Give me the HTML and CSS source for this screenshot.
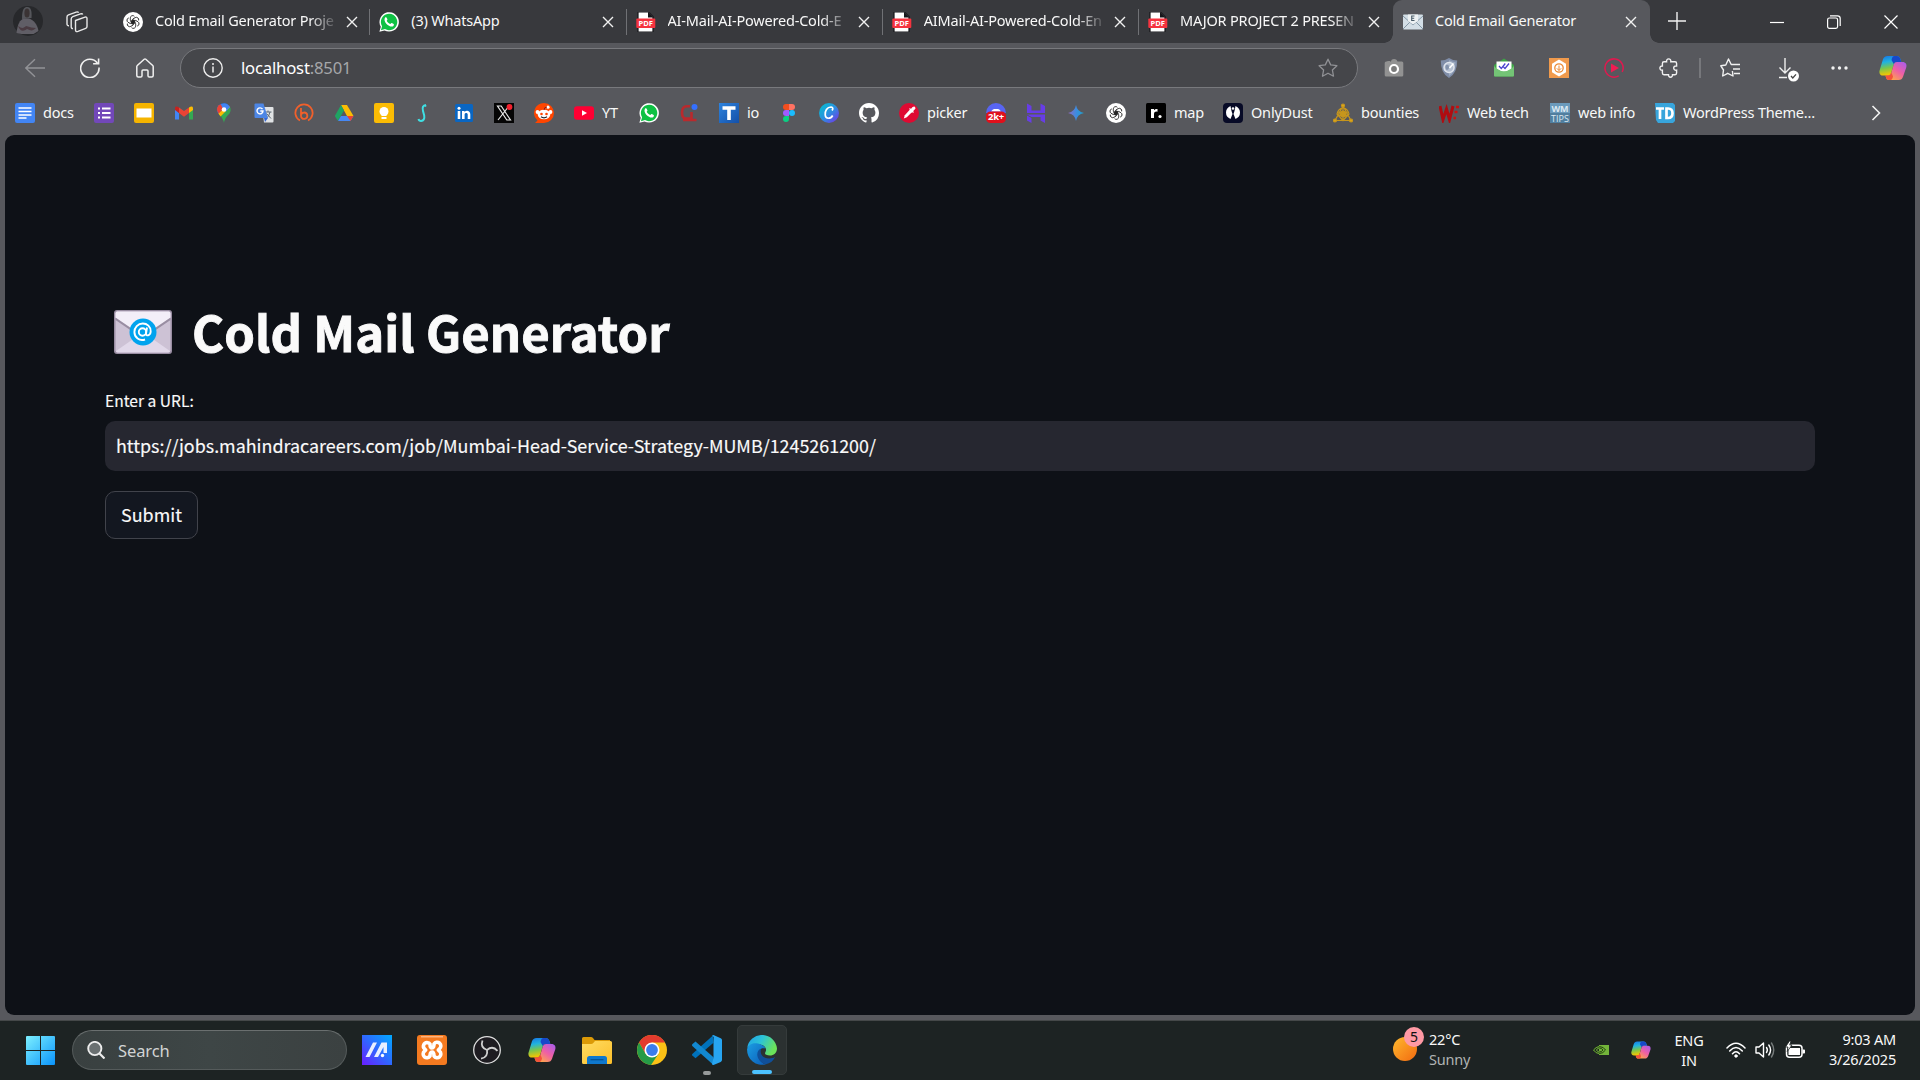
FILE: index.html
```html
<!DOCTYPE html>
<html lang="en">
<head>
<meta charset="utf-8">
<title>Cold Email Generator</title>
<link rel="stylesheet" href="styles.css">
</head>
<body>
<svg class="defs" aria-hidden="true">
  <defs>
    <linearGradient id="cpA" x1="0" y1="0" x2=".2" y2="1"><stop offset="0" stop-color="#1672e6"/><stop offset=".35" stop-color="#20b2e0"/><stop offset=".65" stop-color="#79c64d"/><stop offset="1" stop-color="#f7c600"/></linearGradient>
    <linearGradient id="cpB" x1="1" y1="0" x2=".2" y2="1"><stop offset="0" stop-color="#a35cf0"/><stop offset=".5" stop-color="#ef5fa5"/><stop offset="1" stop-color="#ffb13d"/></linearGradient>
    <linearGradient id="win" gradientUnits="userSpaceOnUse" x1="0" y1="0" x2="29" y2="29"><stop offset="0" stop-color="#7df0ff"/><stop offset="1" stop-color="#0a93fb"/></linearGradient>
    <linearGradient id="ma" x1="0" y1="1" x2="1" y2="0"><stop offset="0" stop-color="#6a1cff"/><stop offset=".5" stop-color="#2f68ff"/><stop offset="1" stop-color="#00aaff"/></linearGradient>
    <linearGradient id="sun" x1="0" y1="0" x2="1" y2="1"><stop offset="0" stop-color="#ffb92e"/><stop offset="1" stop-color="#f26a10"/></linearGradient>
    <linearGradient id="edgeTop" x1="0" y1="0" x2="1" y2=".4"><stop offset="0" stop-color="#1f9fe8"/><stop offset=".5" stop-color="#2cc3d6"/><stop offset="1" stop-color="#6be35a"/></linearGradient>
    <linearGradient id="edgeLow" x1="0" y1="0" x2="1" y2="1"><stop offset="0" stop-color="#1b9de2"/><stop offset="1" stop-color="#0b5cb8"/></linearGradient>
    <linearGradient id="canva" x1="0" y1="0" x2="1" y2="1"><stop offset="0" stop-color="#00c4cc"/><stop offset=".5" stop-color="#2a90e0"/><stop offset="1" stop-color="#7d2ae8"/></linearGradient>
    <linearGradient id="gem" x1="0" y1="0" x2="1" y2="0"><stop offset="0" stop-color="#9168c0"/><stop offset=".5" stop-color="#3f8be0"/><stop offset="1" stop-color="#1ba1c8"/></linearGradient>
    <linearGradient id="folder" x1="0" y1="0" x2="1" y2="1"><stop offset="0" stop-color="#ffdc62"/><stop offset="1" stop-color="#fcbf2b"/></linearGradient>
    <linearGradient id="tbl" x1="0" y1="0" x2="1" y2="1"><stop offset="0" stop-color="#2d83de"/><stop offset="1" stop-color="#1450a8"/></linearGradient>
    <symbol id="close" viewBox="0 0 12 12"><path d="M1 1l10 10M11 1L1 11" fill="none" stroke="#f1f1f1" stroke-width="1.4"/></symbol>
    <symbol id="gpt" viewBox="0 0 20 20"><circle cx="10" cy="10" r="10" fill="#fff"/><g fill="none" stroke="#222" stroke-width=".85"><path id="petal" d="M7.300 8.400V5.900a2.400 2.400 0 0 1 4.100-1.600M7.300 8.400l4.300 2.500v-3"/><use href="#petal" transform="rotate(60 10 10)"/><use href="#petal" transform="rotate(120 10 10)"/><use href="#petal" transform="rotate(180 10 10)"/><use href="#petal" transform="rotate(240 10 10)"/><use href="#petal" transform="rotate(300 10 10)"/></g></symbol>
    <symbol id="wa" viewBox="0 0 20 20"><path d="M.4 19.800l1.400-5A9.700 9.700 0 1 1 5.500 18.400z" fill="#fff"/><path d="M1.900 18.200l1.200-3.900a8.200 8.200 0 1 1 2.900 2.800z" fill="#0fc144"/><path d="M6.100 5.600c.5-.6 1.300-.6 1.600.1l.7 1.500c.2.500-.3 1-.7 1.500 1 1.800 2 2.700 3.700 3.400.6-.6 1-1.200 1.500-1l1.700.9c.7.400.2 1.700-.5 2.200-3 1.900-9.600-3.700-8.500-7.500z" fill="#fff"/></symbol>
    <symbol id="pdf" viewBox="0 0 20 20"><path d="M2 0h10.500L17 4.500V20H2z" fill="#fff" stroke="#16161a" stroke-width="1.200"/><path d="M12 0l5.500 5.500H12z" fill="#16161a"/><rect x=".3" y="6.500" width="19" height="9.500" rx="1" fill="#f5333f"/><text x="9.800" y="14.100" class="pdf-word" text-anchor="middle">PDF</text></symbol>
    <symbol id="copilot" viewBox="0 0 28 28"><path d="M8.500 2h9c2.400 0 3.500 1.600 4.100 3.600L22.300 8H18c-2 0-2.800 1-3.400 3l-2.300 7.500c-.6 2-1.800 3.100-3.700 3.100H4.300c-3 0-4.500-2.300-3.700-5.200L3.900 5.600C4.600 3.400 6.200 2 8.500 2z" fill="url(#cpA)"/><path d="M17.500 2c2.400 0 3.500 1.600 4.100 3.600L22.300 8H18c-2 0-2.500.7-3.100 2.200L12.500 6c.6-2.500 1.200-4 3-4z" fill="#1748c9"/><path d="M19.500 26h-9c-2.400 0-3.200-1.300-3.700-3.300l-.3-1.100h2.600c2 0 2.700-1.200 3.300-3.100L14.600 11c.7-2 1.500-3 3.500-3h5.300c3.400 0 4.600 2.300 3.900 5.200l-3.200 9.200c-.7 2.200-2.200 3.600-4.600 3.600z" fill="url(#cpB)"/><path d="M6.500 21.600h2.600c2 0 2.800-1.100 3.400-3l1.500 4c-.6 2-1 3.400-2.500 3.400h-1c-2.400 0-3.200-1.300-3.700-3.300z" fill="#f4523b"/></symbol>
  </defs>
</svg>
<div class="browser">
  <header class="tabstrip">
    <svg class="avatar" viewBox="0 0 30 30"><circle cx="15" cy="15" r="15" fill="#27282b"/><path d="M9 13c0-10 2-12 5.500-12S19 5 18.500 12z" fill="#55565b"/><path d="M3.500 27c1-9 3.500-13 7-14.500h5c5 1 9 6 10 12.500l-5 3h-12z" fill="#605e66"/><ellipse cx="14" cy="7" rx="2.600" ry="4.500" fill="#3a3334"/><path d="M5 20c4 3 6 2 8 0 4 1 7 2 10 2-3 3-5 3-9 1-4 3-7 2-9-3z" fill="#4a3b42"/></svg>
    <svg class="spaces" viewBox="0 0 22 22" fill="none" stroke="#e8e8e8" stroke-width="1.400" stroke-linejoin="round"><path d="M9.500 9.500l9.500-3.300q2-.6 2 1.300v8q0 1.400-1.300 1.900l-7.800 3q-2.400.8-2.400-1.400z"/><path d="M7 17.500q-1.800.2-1.800-1.700V8q0-1.800 1.600-2.400l7.700-2.700q1.800-.5 2.200.6M3 14.700q-2 .1-2-1.700V6q0-1.600 1.500-2.200l7.700-2.700q1.900-.6 2.300.6"/></svg>
    <div class="tabs">
      <div class="tab"><svg class="ic"><use href="#gpt"/></svg><span class="tab-title fade">Cold Email Generator Proje</span><svg class="x"><use href="#close"/></svg></div>
      <div class="tab"><svg class="ic"><use href="#wa"/></svg><span class="tab-title">(3) WhatsApp</span><svg class="x"><use href="#close"/></svg></div>
      <div class="tab"><svg class="ic"><use href="#pdf"/></svg><span class="tab-title fade">AI-Mail-AI-Powered-Cold-E</span><svg class="x"><use href="#close"/></svg></div>
      <div class="tab"><svg class="ic"><use href="#pdf"/></svg><span class="tab-title fade">AIMail-AI-Powered-Cold-En</span><svg class="x"><use href="#close"/></svg></div>
      <div class="tab last"><svg class="ic"><use href="#pdf"/></svg><span class="tab-title fade">MAJOR PROJECT 2 PRESEN</span><svg class="x"><use href="#close"/></svg></div>
      <div class="tab active"><svg class="ic" viewBox="0 0 20 20"><rect y="2.500" width="20" height="15" rx="1" fill="#d3dee6"/><path d="M0 17l7-7M20 17l-7-7M0 4l10 9 10-9" fill="none" stroke="#8497a5" stroke-width="1"/><path d="M5 2.500h10v6.500l-5 3.500-5-3.500z" fill="#edf1f3"/><path d="M11.500 4H8.700v4.500h2.800M8.700 6.200h2.500" fill="none" stroke="#485b67" stroke-width="1.100"/></svg><span class="tab-title">Cold Email Generator</span><svg class="x"><use href="#close"/></svg></div>
    </div>
    <svg class="plus" viewBox="0 0 18 18"><path d="M9 0v18M0 9h18" stroke="#f1f1f1" stroke-width="1.400"/></svg>
    <div class="window-buttons">
      <svg viewBox="0 0 14 14"><path d="M0 7.500h14" stroke="#fff" stroke-width="1.200"/></svg>
      <svg viewBox="0 0 14 14" fill="none" stroke="#fff" stroke-width="1.200"><rect x=".6" y="3" width="10" height="10.400" rx="1.800"/><path d="M3 .8h7.500q2.700 0 2.700 2.700v7.500"/></svg>
      <svg viewBox="0 0 14 14"><path d="M.5.500l13 13M13.500.500l-13 13" stroke="#fff" stroke-width="1.200"/></svg>
    </div>
  </header>
  <div class="toolbar">
    <div class="nav">
      <svg viewBox="0 0 20 20" fill="none" stroke="#929397" stroke-width="1.400"><path d="M20 10H.8M10 1.200L.8 10l9.200 8.800"/></svg>
      <svg viewBox="0 0 20 20" fill="none" stroke="#f0f0f0" stroke-width="1.600"><path d="M19 9.500A9.200 9.200 0 1 1 17.300 5M18.600.500v5.300h-5.500"/></svg>
      <svg viewBox="0 0 20 20" fill="none" stroke="#f0f0f0" stroke-width="1.500" stroke-linejoin="round"><path d="M1.800 8.500q0-.6.500-1L9.200 1.300q.8-.7 1.600 0l6.900 6.200q.5.500.5 1v9q0 1.500-1.500 1.500h-2.400q-1.300 0-1.300-1.300V13q0-1-1-1H8q-1 0-1 1v4.700q0 1.300-1.300 1.300H3.300q-1.500 0-1.500-1.500z"/></svg>
    </div>
    <div class="address">
      <svg class="ic" viewBox="0 0 20 20"><circle cx="10" cy="10" r="9.200" fill="none" stroke="#eee" stroke-width="1.400"/><circle cx="10" cy="6" r="1" fill="#eee"/><path d="M10 8.600v6" stroke="#eee" stroke-width="1.500"/></svg>
      <span class="url">localhost<span class="port">:8501</span></span>
      <svg class="ic" viewBox="0 0 20 20"><path d="M10 1.200l2.700 5.700 6.200.8-4.500 4.300 1.100 6.200L10 15.200l-5.500 3 1.100-6.200L1.100 7.700l6.200-.8z" fill="none" stroke="#909195" stroke-width="1.300" stroke-linejoin="round"/></svg>
    </div>
    <div class="extensions">
      <svg viewBox="0 0 20 20"><path d="M2.500 4.500q0-2 3.500-1.500V4zM7 4q0-3 3-3t3.500 3z" fill="#929292"/><rect x=".7" y="3.600" width="18.600" height="15" rx="1.500" fill="#929292"/><circle cx="10" cy="11" r="4" fill="#7b7b7b" stroke="#fff" stroke-width="2.200"/></svg>
      <svg viewBox="0 0 20 20"><path d="M10 0q4 2.500 8.200 2.500Q18.500 15 10 20 1.500 15 1.800 2.500 6 2.500 10 0z" fill="#7f8da8"/><path d="M10 2q3 2 6.600 2.200Q16.500 14 10 18z" fill="#9caac0"/><circle cx="10" cy="9.500" r="5" fill="#b5c0d2" stroke="#dfe4ed" stroke-width="1.500"/><path d="M7 7q3-1 3 2t-2.500 3q-2-3-.5-5z" fill="#8493ad"/><path d="M10.500 10L14.500 5.500" stroke="#fff" stroke-width="1.600"/></svg>
      <svg viewBox="0 0 20 20"><path d="M0 7l10-6.500L20 7v10.500q0 1-1 1H1q-1 0-1-1z" fill="#3fa447"/><path d="M2.500 3.500h15v7.500L10 15l-7.500-4z" fill="#fff"/><path d="M0 8l2.500 2.500Q10 16 17.500 10.500L20 8v9.500q0 1-1 1H1q-1 0-1-1z" fill="#74c476"/><path d="M5 8L7.300 10.500l4-5M9.500 9L11 10.500l4-5" fill="none" stroke="#4942ce" stroke-width="1.300"/></svg>
      <svg viewBox="0 0 20 20"><rect width="20" height="20" fill="#f09a4c"/><path d="M10 1.500l7 4.200v8.600l-7 4.200-7-4.200V5.700z" fill="#fff"/><circle cx="10" cy="10" r="4.200" fill="none" stroke="#eb8a34" stroke-width="1.300"/><path d="M10 7.500v5M7.800 10.300L10 12.500l2.200-2.200" fill="none" stroke="#eb8a34"/></svg>
      <svg viewBox="0 0 20 20"><path d="M14.700 17.800A9.100 9.100 0 1 1 18.200 14" fill="none" stroke="#df194f" stroke-width="1.500"/><path d="M7 5.500l8 4.500-8 4.500z" fill="#f01c52"/></svg>
      <svg viewBox="0 0 20 20"><path d="M5 3.800h2.600C7.300 2 8.300.900 9.700.9s2.400 1.100 2.100 2.900H16q1.600 0 1.600 1.600V8c-1.800-.3-2.900.7-2.900 2.100s1.100 2.400 2.900 2.100v2.900q0 1.600-1.600 1.600h-2.500c.2 1.600-.8 2.500-2 2.500s-2.200-.9-2-2.500H5q-1.600 0-1.600-1.600v-3C1.800 12.300.9 11.400.9 10.100S1.800 7.900 3.400 8V5.400Q3.400 3.800 5 3.800z" fill="none" stroke="#f0f0f0" stroke-width="1.400"/></svg>
    </div>
    <div class="tools">
      <svg class="ic" viewBox="0 0 20 20" fill="none" stroke="#f0f0f0" stroke-width="1.400" stroke-linejoin="round"><path d="M12.400 13L13 18l-5.300-2.700-5 2.700.8-6L.800 7.800l5-.8L8.500 1l2.700 5.500H20M13 11h7M14 15.500h6"/></svg>
      <svg class="download" viewBox="0 0 22 24"><path d="M8 0v15M2.500 9.500L8 15l5.500-5.500M2 19.500h8" fill="none" stroke="#f0f0f0" stroke-width="1.400"/><circle cx="16.500" cy="18" r="5.500" fill="#fff"/><path d="M14 18l1.800 2 3.200-3.600" fill="none" stroke="#444" stroke-width="1.300"/></svg>
      <svg class="dots" viewBox="0 0 17 4" fill="#f2f2f2"><circle cx="2" cy="2" r="1.700"/><circle cx="8.500" cy="2" r="1.700"/><circle cx="15" cy="2" r="1.700"/></svg>
      <svg class="pilot"><use href="#copilot"/></svg>
    </div>
  </div>
  <nav class="bookmarks">
    <a><svg class="ic" viewBox="0 0 20 20"><rect width="20" height="20" rx="2" fill="#4285f4"/><path d="M3.500 5h13M3.500 8.500h13M3.500 12h13M3.500 15h8" stroke="#fff" stroke-width="1.700"/></svg><span class="w31">docs</span></a>
    <a><svg class="ic" viewBox="0 0 20 20"><rect width="20" height="20" rx="2" fill="#7248b9"/><path d="M4 5.500h2M8 5.500h8.500M4 10h2M8 10h8.500M4 14.500h2M8 14.500h8.500" stroke="#fff" stroke-width="2"/></svg></a>
    <a><svg class="ic" viewBox="0 0 20 20"><rect width="20" height="20" rx="2" fill="#f5b400"/><rect x="2.500" y="5.500" width="15" height="9" fill="#fff"/></svg></a>
    <a><svg class="ic" viewBox="0 0 20 20"><path d="M1 5v11.500h4V10z" fill="#4285f4"/><path d="M19 5v11.500h-4V10z" fill="#34a853"/><path d="M5 10V4.500L10 8l5-3.500V10l-5 3.700z" fill="#ea4335"/><path d="M1 5.500C1 3 3 3 5 4.500V10L1 7z" fill="#c5221f"/><path d="M19 5.500C19 3 17 3 15 4.500V10l4-3z" fill="#fbbc04"/></svg></a>
    <a><svg class="ic" viewBox="0 0 20 20"><path d="M4 10q5 5 6 10 .6-5 5.500-9.500Q17.500 7 16 4z" fill="#34a853"/><path d="M3.500 4Q2 8 4.500 11L14 1.200Q7-1.500 3.500 4z" fill="#1a73e8"/><path d="M6.500 1.300L10 4.500 4.800 11Q2 7 3.500 4 4.600 2 6.500 1.300z" fill="#ea4335"/><path d="M4.500 10.700L13 2l-3-1.500L16 4l-9.500 9.500z" fill="#fbbc04"/><path d="M7 1.200Q13-1.200 16 4l-4 4.500L8 4z" fill="#4285f4"/><circle cx="10" cy="6.500" r="2.300" fill="#fff"/></svg></a>
    <a><svg class="ic" viewBox="0 0 20 20"><path d="M8 4h10.500q1 0 1 1v13.500q0 1-1 1H10z" fill="#e1e3e5"/><path d="M10.500 9h7M14 7.500V9m2 0q-1 5-4 6.500M12.500 10.500l4.500 5" stroke="#5f6b76" fill="none"/><path d="M1.500.500h8L14 15H1.500q-1 0-1-1V1.500q0-1 1-1z" fill="#4d86e5"/><path d="M10 15h4l-3 4z" fill="#3367d6"/><path d="M8.500 6.200A3 3 0 1 0 9 8H6.300" fill="none" stroke="#fff" stroke-width="1.400"/></svg></a>
    <a><svg class="ic" viewBox="0 0 20 20" fill="none" stroke="#f1602b" stroke-width="1.800"><path d="M6 17.500A8.600 8.600 0 1 1 14 17.500M7 5v8.500M7 13.500a3.200 3.200 0 1 0 3-4q-2 0-3 2"/></svg></a>
    <a><svg class="ic" viewBox="0 0 20 20"><path d="M7 2h6l6.500 11H13z" fill="#fbbc04"/><path d="M7 2l3 5.500L4 18 .800 13z" fill="#1fa463"/><path d="M4 18l3-5h12.500l-3 5z" fill="#4688f4"/><path d="M16.500 18L13 13h6.500z" fill="#ea4335"/></svg></a>
    <a><svg class="ic" viewBox="0 0 20 20"><rect width="20" height="20" rx="2" fill="#fbbc04"/><circle cx="10" cy="8.500" r="4.500" fill="#fff"/><path d="M7.500 10h5v3h-5zM7.500 14h5v2h-5z" fill="#fff"/></svg></a>
    <a><svg class="ic" viewBox="0 0 20 20"><path d="M12 2q-4.500.500-3 6l1.200 4.500q.8 5-3.200 5.500-2 0-2.500-2M11 3.500l1-1.500" fill="none" stroke="#3fdfe3" stroke-width="2"/></svg></a>
    <a><svg class="ic" viewBox="0 0 20 20"><rect x="1" y="1" width="18" height="18" rx="1.500" fill="#0a66c2"/><path d="M3.700 8h2.600v8H3.700zM8 8h2.500v1.100C12.500 6.700 16.300 8 16.300 11.200V16h-2.600v-4.400c0-2-3.100-2-3.100 0V16H8z" fill="#fff"/><circle cx="5" cy="5.300" r="1.500" fill="#fff"/></svg></a>
    <a><svg class="ic" viewBox="0 0 20 20"><rect width="20" height="20" fill="#050505"/><path d="M3.500 3h3.700L16.500 17h-3.700zM15 3L4 17" fill="none" stroke="#e8e8e8" stroke-width="1.200"/><circle cx="15.500" cy="4" r="2.900" fill="#f4212e"/></svg></a>
    <a><svg class="ic" viewBox="0 0 20 20"><path d="M10 0a10 10 0 1 1 0 20H1l2.500-2.500A10 10 0 0 1 10 0z" fill="#ff4500"/><ellipse cx="10" cy="11.500" rx="6.300" ry="4.800" fill="#fff"/><circle cx="3.500" cy="9" r="1.900" fill="#fff"/><circle cx="16.500" cy="9" r="1.900" fill="#fff"/><circle cx="14" cy="4.200" r="1.600" fill="#fff"/><path d="M10 7q0-3 3-3" stroke="#842123" fill="none"/><circle cx="7.500" cy="11" r="1.300" fill="#ff4500"/><circle cx="12.500" cy="11" r="1.300" fill="#ff4500"/><path d="M7 13.800q3 2 6 0" stroke="#222" stroke-width="1.300" fill="none"/></svg></a>
    <a><svg class="ic" viewBox="0 0 20 20"><rect y="3.200" width="20" height="13.600" rx="3" fill="#ff0033"/><path d="M8 7.200l5 2.800-5 2.800z" fill="#fff"/></svg><span class="w17">YT</span></a>
    <a><svg class="ic"><use href="#wa"/></svg></a>
    <a><svg class="ic" viewBox="0 0 20 20"><path d="M11 3.200H8Q3 3.200 3 9.500T7.500 15.500H12.500V9M4 17h13.500" fill="none" stroke="#b92a2d" stroke-width="2.600"/><circle cx="15.500" cy="4" r="3" fill="#3470ff"/></svg></a>
    <a><svg class="ic" viewBox="0 0 20 20"><rect width="20" height="20" fill="url(#tbl)"/><path d="M3.500 3.300h13v3.500h-4.700V17H8.200V6.800H3.500z" fill="#fff"/></svg><span class="w12">io</span></a>
    <a><svg class="ic" viewBox="0 0 20 20"><path d="M10 1H7a3 3 0 0 0 0 6h3z" fill="#f24e1e"/><path d="M10 1h3a3 3 0 0 1 0 6h-3z" fill="#ff7262"/><path d="M10 7H7a3 3 0 0 0 0 6h3z" fill="#a259ff"/><circle cx="13" cy="10" r="3" fill="#1abcfe"/><path d="M10 13H7a3 3 0 1 0 3 3z" fill="#0acf83"/></svg></a>
    <a><svg class="ic" viewBox="0 0 20 20"><circle cx="10" cy="10" r="10" fill="url(#canva)"/><path d="M13 7.500q2-3-1-3.500C8 4 5.800 8 6.200 12c.4 4.500 5.500 4 7.500.5" fill="none" stroke="#fff" stroke-width="1.700"/></svg></a>
    <a><svg class="ic" viewBox="0 0 16 16"><path fill="#fff" d="M8 0C3.580 0 0 3.580 0 8c0 3.540 2.290 6.530 5.470 7.590.4.070.55-.17.55-.38v-1.330c-2.230.48-2.700-.95-2.700-1.080-.36-.9-.87-1.150-.87-1.150-.73-.5.060-.49.060-.49.800.060 1.220.82 1.220.82.71 1.220 1.870.87 2.330.66.070-.52.280-.87.500-1.070-1.780-.2-3.640-.89-3.640-3.950 0-.87.310-1.590.82-2.150-.08-.2-.36-1.020.08-2.120 0 0 .67-.22 2.200.82a7.600 7.600 0 0 1 4 0c1.530-1.040 2.200-.82 2.200-.82.44 1.100.16 1.920.08 2.120.51.560.82 1.270.82 2.150 0 3.070-1.870 3.750-3.650 3.950.29.250.54.730.54 1.480v2.200c0 .21.150.46.550.38A8 8 0 0 0 16 8c0-4.420-3.580-8-8-8z"/></svg></a>
    <a><svg class="ic" viewBox="0 0 20 20"><circle cx="10" cy="10" r="10" fill="#df0a32"/><path d="M4.800 15.500l1-3.200L10.500 7l2.300 2.200-5 5z" fill="#fff"/><path d="M10.500 5.500l4 4M11 8l3-3.500q2-1 1.800 1L12.500 9z" stroke="#fff" stroke-width="1.200" fill="#fff"/></svg><span class="w39">picker</span></a>
    <a><svg class="ic" viewBox="0 0 20 20"><path d="M0 10a10 10 0 0 1 20 0z" fill="#5865f2"/><path d="M5 8.500q2-3 3.500-2.500h3q2-.5 3.500 2.500z" fill="#fff"/><rect y="8.500" width="20" height="11.500" rx="4.500" fill="#e1101b"/><text x="10" y="17.400" class="badge-word" text-anchor="middle">2k+</text></svg></a>
    <a><svg class="ic" viewBox="0 0 20 20" fill="#673de6"><path d="M1 .5l4.500 2.500v4.500H14.500L19 10H1zM14.500.5L19 3v7l-4.500-2.500zM1 11.500h18V20l-4.500-2.500V14H5.500L1 11.500zM1 12.500l4.500 2.500v5L1 17.500z"/></svg></a>
    <a><svg class="ic" viewBox="0 0 20 20"><path d="M10 2q1.200 6.800 8 8-6.800 1.200-8 8-1.200-6.800-8-8 6.800-1.200 8-8z" fill="url(#gem)"/></svg></a>
    <a><svg class="ic"><use href="#gpt"/></svg></a>
    <a><svg class="ic" viewBox="0 0 20 20"><rect width="20" height="20" rx="1.500" fill="#000"/><path d="M5 6h3v1.200Q9.200 5.700 11.500 6v2.700q-3.500-.5-3.500 2V15H5z" fill="#fff"/><circle cx="14" cy="13.500" r="1.600" fill="#fff"/></svg><span class="w29">map</span></a>
    <a><svg class="ic" viewBox="0 0 20 20"><rect width="20" height="20" rx="4" fill="#070a26"/><path d="M7.500 3Q3 5 3 9.500T7.500 16l2-5L8.500 8zM12.500 3Q17 5 17 9.500T12.500 16l-2-5 1-3z" fill="#fff"/><circle cx="10" cy="5.500" r="1.300" fill="#fff"/></svg><span class="w62">OnlyDust</span></a>
    <a><svg class="ic" viewBox="0 0 20 20" fill="none" stroke="#c7961c" stroke-width="1.200"><path d="M10 3L2 17.500h16zM10 3v14M4 11q1-5 6-6.500Q15 6 16 11L10 17.500zM5 13l10-4M15 13L5 9"/><circle cx="10" cy="11" r="3" fill="#c7961c"/><g fill="#e0a818"><circle cx="10" cy="2.500" r="1.500"/><circle cx="2" cy="17.500" r="1.500"/><circle cx="18" cy="17.500" r="1.500"/></g></svg><span class="w58">bounties</span></a>
    <a><svg class="ic" viewBox="0 0 20 20"><path d="M1 3l3 13.500L7.500 6l3 10.500L14 3" fill="none" stroke="#b00c10" stroke-width="3"/><path d="M17 4h3M15.500 9h3M14.500 15h2.500" stroke="#c11" stroke-width="2.500"/></svg><span class="w63">Web tech</span></a>
    <a><svg class="ic" viewBox="0 0 20 20"><rect width="20" height="20" fill="#517f9f"/><rect width="20" height="10" fill="#6b9abb"/><text x="10" y="9" class="wm-word" textLength="17" text-anchor="middle">WM</text><text x="10" y="18.500" class="wm-word low" textLength="18" text-anchor="middle">TIPS</text></svg><span class="w57">web info</span></a>
    <a><svg class="ic" viewBox="0 0 20 20"><path d="M0 0h18l2 2v16l-2 2H3l-2-3z" fill="#38a5dc"/><path d="M1 5.500h8M5 5v11M11.500 5.500V15h1.500q4.500 0 4.500-4.800t-4.500-4.700z" fill="none" stroke="#fff" stroke-width="2.700"/></svg><span class="w131">WordPress Theme...</span></a>
    <svg class="more" viewBox="0 0 10 16"><path d="M1.500 1l7 7-7 7" fill="none" stroke="#f1f1f1" stroke-width="1.600"/></svg>
  </nav>
  <main class="page">
    <h1>
      <svg class="mail" viewBox="0 0 58 44"><rect width="58" height="44" rx="3" fill="#998da2"/><rect x="1.500" y="1.500" width="55" height="41" rx="2" fill="#cdc2d5"/><path d="M2 41L25 25h8l23 16q0 1.500-2 1.500H4Q2 42.500 2 41z" fill="#e1d8e9"/><path d="M1.500 10L25 26h8l23.500-16V8h-55z" fill="#998da2"/><path d="M3 1.500h52q1.500 0 1.500 2v4L33 23.500h-8L1.500 7.500v-4q0-2 1.500-2z" fill="#f3eef8"/><circle cx="29" cy="22" r="13.500" fill="#00a3ee"/><g fill="none" stroke="#fff" stroke-width="1.900"><circle cx="28.500" cy="22" r="3.700"/><path d="M33 17.500l-1 6c-.3 3 4.500 2.500 4.700-2 .2-5-3.700-8-7.900-8-5 0-8.400 4-8.400 8.500 0 5.500 5 9.500 10.600 7.500"/></g></svg>
      <span>Cold Mail Generator</span>
    </h1>
    <label class="field-label">Enter a URL:</label>
    <div class="field">https://jobs.mahindracareers.com/job/Mumbai-Head-Service-Strategy-MUMB/1245261200/</div>
    <button class="submit">Submit</button>
  </main>
</div>
<footer class="taskbar">
  <svg class="start" viewBox="0 0 29 29" fill="url(#win)"><path d="M1 0h13v14H0V1q0-1 1-1zM15 0h13q1 0 1 1v13H15zM0 15h14v14H1q-1 0-1-1zM15 15h14v13q0 1-1 1H15z"/></svg>
  <div class="search"><svg viewBox="0 0 18 18"><circle cx="7.800" cy="7.500" r="6.600" fill="#6a7071" stroke="#ededed" stroke-width="1.900"/><path d="M12.500 12.500l5 5" stroke="#ededed" stroke-width="2.200"/></svg><span>Search</span></div>
  <div class="apps">
    <div class="app"><svg viewBox="0 0 30 30"><rect width="30" height="30" fill="url(#ma)"/><path d="M3.500 22L11 7.500h4L7.500 22zM12 22L19.500 7.500H25V18h-3.500v-6L16 22z" fill="#e9efff"/><circle cx="20.500" cy="20.500" r="1.700" fill="#fff"/></svg></div>
    <div class="app"><svg viewBox="0 0 30 30"><rect width="30" height="30" rx="3" fill="#f47a20"/><path d="M4 1.800h22" stroke="#ffc296" stroke-width="1.200"/><path d="M10 7.500a3.700 3.700 0 0 0-2.500 6.300l1.200 1.200-1.200 1.200A3.700 3.700 0 1 0 13 21q0-4 2-4t2 4a3.700 3.700 0 1 0 5.500-4.800L21.300 15l1.200-1.200A3.700 3.700 0 1 0 17 9q0 4-2 4t-2-4q-.7-1.500-3-1.500z" fill="none" stroke="#fff" stroke-width="3.600" stroke-linejoin="round"/></svg></div>
    <div class="app"><svg viewBox="0 0 30 30"><circle cx="15" cy="15" r="13.300" fill="#1e1c21" stroke="#dedede" stroke-width="1.300"/><g fill="none" stroke="#cfcfcf" stroke-width="1.800"><path id="blade" d="M15 15Q8 12.500 10.500 5.500"/><use href="#blade" transform="rotate(120 15 15)"/><use href="#blade" transform="rotate(240 15 15)"/></g></svg></div>
    <div class="app"><svg viewBox="0 0 28 28"><use href="#copilot" width="28" height="28"/></svg></div>
    <div class="app"><svg viewBox="0 0 30 30"><path d="M0 3.500Q0 2 1.500 2H9q1.200 0 2 1l1.500 2H28v6H0z" fill="#dc9a07"/><path d="M0 9h9q1.500 0 2.500-1.200L13 6h15.500Q30 6 30 7.500v20q0 1.500-1.500 1.500h-27Q0 29 0 27.500z" fill="url(#folder)"/><path d="M5 28v-4.500Q5 21 7.500 21h15q2.500 0 2.500 2.500V29H5z" fill="#0f78ce"/><path d="M8.500 24.700h13" stroke="#075495" stroke-width="1.300"/></svg></div>
    <div class="app"><svg viewBox="0 0 30 30"><circle cx="15" cy="15" r="15" fill="#fbc116"/><path d="M2 7.500A15 15 0 0 1 28 7.500H15L8.500 18.700z" fill="#e33b2e"/><path d="M2 7.500a15 15 0 0 0 12 22.400L21.500 18.700 15 22l-6.500-3.300z" fill="#259b47"/><circle cx="15" cy="15" r="7.500" fill="#fff"/><circle cx="15" cy="15" r="5.900" fill="#3b7ded"/></svg></div>
    <div class="app running"><svg viewBox="0 0 30 30"><path d="M21.500 0v7.800L3.500 23.300.300 20.600q-.6-.8 0-1.600z" fill="#0072bb"/><path d="M21.500 30v-7.800L3.500 6.500.300 9.300q-.6.8 0 1.600z" fill="#1288d0"/><path d="M21.500 0L28.700 3.200Q30 3.800 30 5v20q0 1.300-1.300 1.900L21.500 30q-1 0-1.500-.8L22 28V2L20 .800z" fill="#27a5f1"/><path d="M22 1v28l-2 .2 1.500-7V7.800z" fill="#27a5f1"/></svg></div>
    <div class="app running current"><svg viewBox="0 0 30 30"><path d="M.200 13A15 15 0 0 1 30 13.500c0 4.500-3.500 7-7 7-4 0-6-1.500-4.500-3.500C20.500 13 17 9.500 12 9.500 6 9.500 2 11 .200 13z" fill="url(#edgeTop)"/><path d="M.100 14C2 8.500 7 7.500 11 8.500c3.500.8 6.500 2.800 7.500 5-4.500-1.500-8 2-7.500 6.500.5 5 4 8.500 8 9.300A15 15 0 0 1 .100 14z" fill="url(#edgeLow)"/><path d="M14.500 13.500c-4.500 1.500-5.500 7-2.500 11 1.500 2.500 4 4.500 7 4.800 4-1 7-3 9.200-7.300-6 3-13 1-14.200-3.500-.5-2-.5-3.500.5-5z" fill="#104f99"/></svg></div>
  </div>
  <div class="weather"><div class="sun-wrap"><svg viewBox="0 0 24 24"><circle cx="12" cy="12" r="12" fill="url(#sun)"/></svg><span class="count">5</span></div><div class="stack left"><span>22°C</span><span class="dim">Sunny</span></div></div>
  <div class="tray">
    <svg class="nv" viewBox="0 0 16 12"><path d="M6 1h10v10H6z" fill="#73b43a"/><path d="M.500 6Q3 2.500 6.500 2.500 11 3 12.500 6q-2.500 3.500-6 3.500Q3 9.500.500 6zM3.500 6q1-2 3-2t3.500 2q-1.500 2-3.500 2t-3-2z" fill="none" stroke="#23420f" stroke-width="1"/><path d="M6 2.500Q3 3 .500 6 3 9.500 6 9.500M6 4Q4 4.500 3.500 6 4.500 8 6 8" fill="none" stroke="#73b43a"/></svg>
    <svg class="mini"><use href="#copilot"/></svg>
    <div class="stack lang"><span>ENG</span><span>IN</span></div>
    <svg class="wifi" viewBox="0 0 20 16" fill="none" stroke="#fff" stroke-width="1.500" stroke-linecap="round"><path d="M1 6q9-9.500 18 0M3.700 9q6.300-6.800 12.600 0M6.500 11.700q3.500-3.700 7 0"/><circle cx="10" cy="14" r="1.300" fill="#fff" stroke-width=".8"/></svg>
    <svg class="vol" viewBox="0 0 20 16" fill="none" stroke="#fff" stroke-width="1.400" stroke-linejoin="round" stroke-linecap="round"><path d="M1 5h3l4.500-4v14L4 11H1zM11.500 5.500q1.800 2.500 0 5M13.800 3q3.500 5 0 10"/><path d="M16.500 1q4.500 7 0 14" stroke="#767b7b"/></svg>
    <svg class="bat" viewBox="0 0 20 17"><rect x="1.500" y="4.200" width="15.500" height="12" rx="3" fill="none" stroke="#fff" stroke-width="1.500"/><path d="M3.500 7h11.500v7H3.500zM17.500 8.500h1.700q.8 0 .8 1v2q0 1-.8 1h-1.700z" fill="#fff"/><path d="M4.500 0L.500 6H3l-.8 4.500L7 4H4.700L6 0z" fill="#fff" stroke="#1e2424" stroke-width=".8"/></svg>
    <div class="stack right clock"><span>9:03 AM</span><span>3/26/2025</span></div>
  </div>
</footer>
</body>
</html>
```

FILE: styles.css
```css
* { box-sizing: border-box; }
body { margin: 0; width: 1920px; height: 1080px; overflow: hidden; display: flex; flex-direction: column; font-family: "Noto Sans", "Open Sans", sans-serif; font-size: 14.500px; letter-spacing: -0.200px; color: #f8f8f8; background: #57585d; }
svg { display: block; flex: none; }
.defs { position: absolute; width: 0; height: 0; }
.ic { width: 20px; height: 20px; }
.browser { height: 1021px; display: flex; flex-direction: column; padding-bottom: 5px; border-bottom: 1px solid #454849; }
.tabstrip { height: 43px; background: #38393d; display: flex; align-items: center; }
.avatar { width: 30px; height: 30px; margin: -1px 0 0 13px; }
.spaces { width: 22px; height: 22px; margin-left: 23px; }
.tabs { display: flex; align-self: stretch; margin-left: 26px; }
.tab { width: 256.250px; display: flex; align-items: center; padding: 0 12px 0 9px; border-right: 1.500px solid transparent; border-image: linear-gradient(transparent 22%, #707175 22%, #707175 80%, transparent 80%) 1; }
.tab.last { border-image: none; width: 254px; }
.tab-title { width: 181px; margin-left: 12px; white-space: nowrap; flex: 1; margin-top: -4px; }
.fade { -webkit-mask-image: linear-gradient(90deg, #000 86%, transparent 103%); mask-image: linear-gradient(90deg, #000 86%, transparent 103%); }
.x { width: 12px; height: 12px; margin-left: 12px; }
.active { border: 0; width: 257px; padding: 0 13px 0 10px; background: #57585d; border-radius: 9px 9px 0 0; position: relative; }
.active::before, .active::after { content: ""; position: absolute; bottom: 0; width: 9px; height: 9px; }
.active::before { left: -9px; background: radial-gradient(circle at 0 0, transparent 8.500px, #57585d 9px); }
.active::after { right: -9px; background: radial-gradient(circle at 100% 0, transparent 8.500px, #57585d 9px); }
.plus { width: 18px; height: 18px; margin: -2px 0 0 18px; }
.window-buttons { display: flex; gap: 43px; margin-left: auto; padding-right: 22px; }
.window-buttons svg { width: 14px; height: 14px; }
.pdf-word { font: 700 7.500px "Open Sans", sans-serif; letter-spacing: 0; fill: #fff; }
.badge-word { font: 700 9.500px "Open Sans", sans-serif; letter-spacing: -.3px; fill: #fff; }
.wm-word { font: 700 9px "Open Sans", sans-serif; letter-spacing: 0; fill: #dce9f2; }
.low { font-weight: 400; }
.toolbar { height: 50px; display: flex; align-items: center; padding-left: 25px; }
.nav { display: flex; gap: 35px; width: 155px; }
.nav svg { width: 20px; height: 20px; }
.address { width: 1178px; height: 40px; display: flex; align-items: center; padding: 0 19px 0 22px; border: 1px solid #78797d; border-radius: 20px; background: #45464a; }
.url { font-size: 16.700px; letter-spacing: -0.200px; margin: -2px auto 0 18px; color: #fff; }
.port { color: #a5a6a9; }
.extensions { display: flex; gap: 35px; padding: 0 20px 0 26px; border-right: 2px solid #77787c; }
.extensions svg { width: 20px; height: 20px; }
.tools { display: flex; align-items: center; margin-left: 19px; }
.tools .ic { width: 20px; }
.download { width: 22px; height: 24px; margin: 4px 0 0 37px; }
.dots { width: 17px; height: 4px; margin-left: 32px; }
.pilot { width: 28px; height: 28px; margin-left: 31px; }
.bookmarks { height: 42px; display: flex; align-items: center; gap: 20px; padding: 0 39px 2px 15px; }
.bookmarks a { display: flex; align-items: center; gap: 8px; }
.bookmarks span { white-space: nowrap; margin-top: -3px; }
.w31 { width: 31px; } .w17 { width: 17px; } .w12 { width: 12px; } .w39 { width: 39px; } .w29 { width: 29px; } .w62 { width: 62px; } .w58 { width: 58px; } .w63 { width: 63px; } .w57 { width: 57px; } .w131 { width: 131px; }
.more { width: 10px; height: 16px; margin-left: auto; }
.page { flex: 1; margin: 0 5px; border-radius: 9px; background: #0e1117; padding: 160px 100px 0; font-family: "Noto Sans CJK SC", sans-serif; letter-spacing: 0; color: #fafafa; }
h1 { margin: 0; height: 71px; display: flex; align-items: center; padding-left: 8.500px; font-size: 49px; font-weight: 700; line-height: 71px; }
h1 span { margin-left: 20.500px; letter-spacing: .08px; -webkit-text-stroke: .9px #fafafa; }
.mail { width: 58px; height: 44px; margin-top: 3px; }
.field-label { display: block; font-size: 15.600px; line-height: 24px; margin-top: 22px; -webkit-text-stroke: .15px #fafafa; }
.field { height: 50px; margin-top: 9px; padding: 0 11px; border-radius: 10px; background: #262730; font-size: 17.900px; line-height: 48px; -webkit-text-stroke: .15px #fafafa; }
.submit { display: block; width: 93px; height: 48px; margin-top: 20px; padding: 0 0 2px; border: 1px solid #41434b; border-radius: 10px; background: #131720; color: #fafafa; font: 400 17.900px "Noto Sans CJK SC", sans-serif; -webkit-text-stroke: .15px #fafafa; }
.taskbar { flex: 1; background: #1d2323; display: flex; align-items: center; padding: 0 0 1px 26px; }
.start { width: 29px; height: 29px; }
.search { width: 275px; height: 40px; margin-left: 17px; padding-left: 14px; display: flex; align-items: center; gap: 13px; border: 1px solid #555b5b; border-top-color: #6a6f6f; border-radius: 20px; background: linear-gradient(90deg, #394040, #3e4646 50%, #3b4141); font-size: 16.500px; letter-spacing: -0.100px; color: #d2d4d4; }
.search svg { width: 18px; height: 18px; }
.apps { display: flex; margin-left: 5px; gap: 5px; }
.app { width: 50px; height: 50px; display: flex; align-items: center; justify-content: center; position: relative; border-radius: 5px; }
.app svg { width: 30px; height: 30px; }
.app:nth-child(4) svg { width: 28px; height: 28px; }
.current { background: #2b3131; border: 1px solid #353b3b; }
.running::after { content: ""; position: absolute; bottom: 0; left: 21px; width: 8px; height: 4px; border-radius: 2px; background: #969a9a; }
.current::after { left: 14px; width: 20px; background: #4cc2ff; }
.weather { display: flex; align-items: center; margin-left: 606px; }
.sun-wrap { position: relative; width: 24px; margin-top: -2px; }
.sun-wrap svg { width: 24px; height: 24px; }
.count { position: absolute; left: 11px; top: -10px; width: 20px; height: 20px; border-radius: 50%; background: #ff99a4; color: #111; text-align: center; line-height: 20px; font-size: 14px; letter-spacing: 0; }
.stack { display: flex; flex-direction: column; line-height: 20px; margin-top: -3px; }
.left { margin-left: 12px; }
.dim { color: #b0b3b3; }
.tray { margin-left: auto; display: flex; align-items: center; padding-right: 24px; }
.nv { width: 16px; height: 12px; }
.mini { width: 20px; height: 20px; margin-left: 22px; }
.lang { align-items: center; width: 34px; margin: -1px 0 0 21px; }
.wifi { width: 20px; height: 16px; margin-left: 20px; }
.vol { width: 20px; height: 16px; margin-left: 9px; }
.bat { width: 20px; height: 17px; margin: -2px 0 0 10px; }
.right { align-items: flex-end; }
.clock { width: 76px; margin-left: 15px; white-space: nowrap; }
```
